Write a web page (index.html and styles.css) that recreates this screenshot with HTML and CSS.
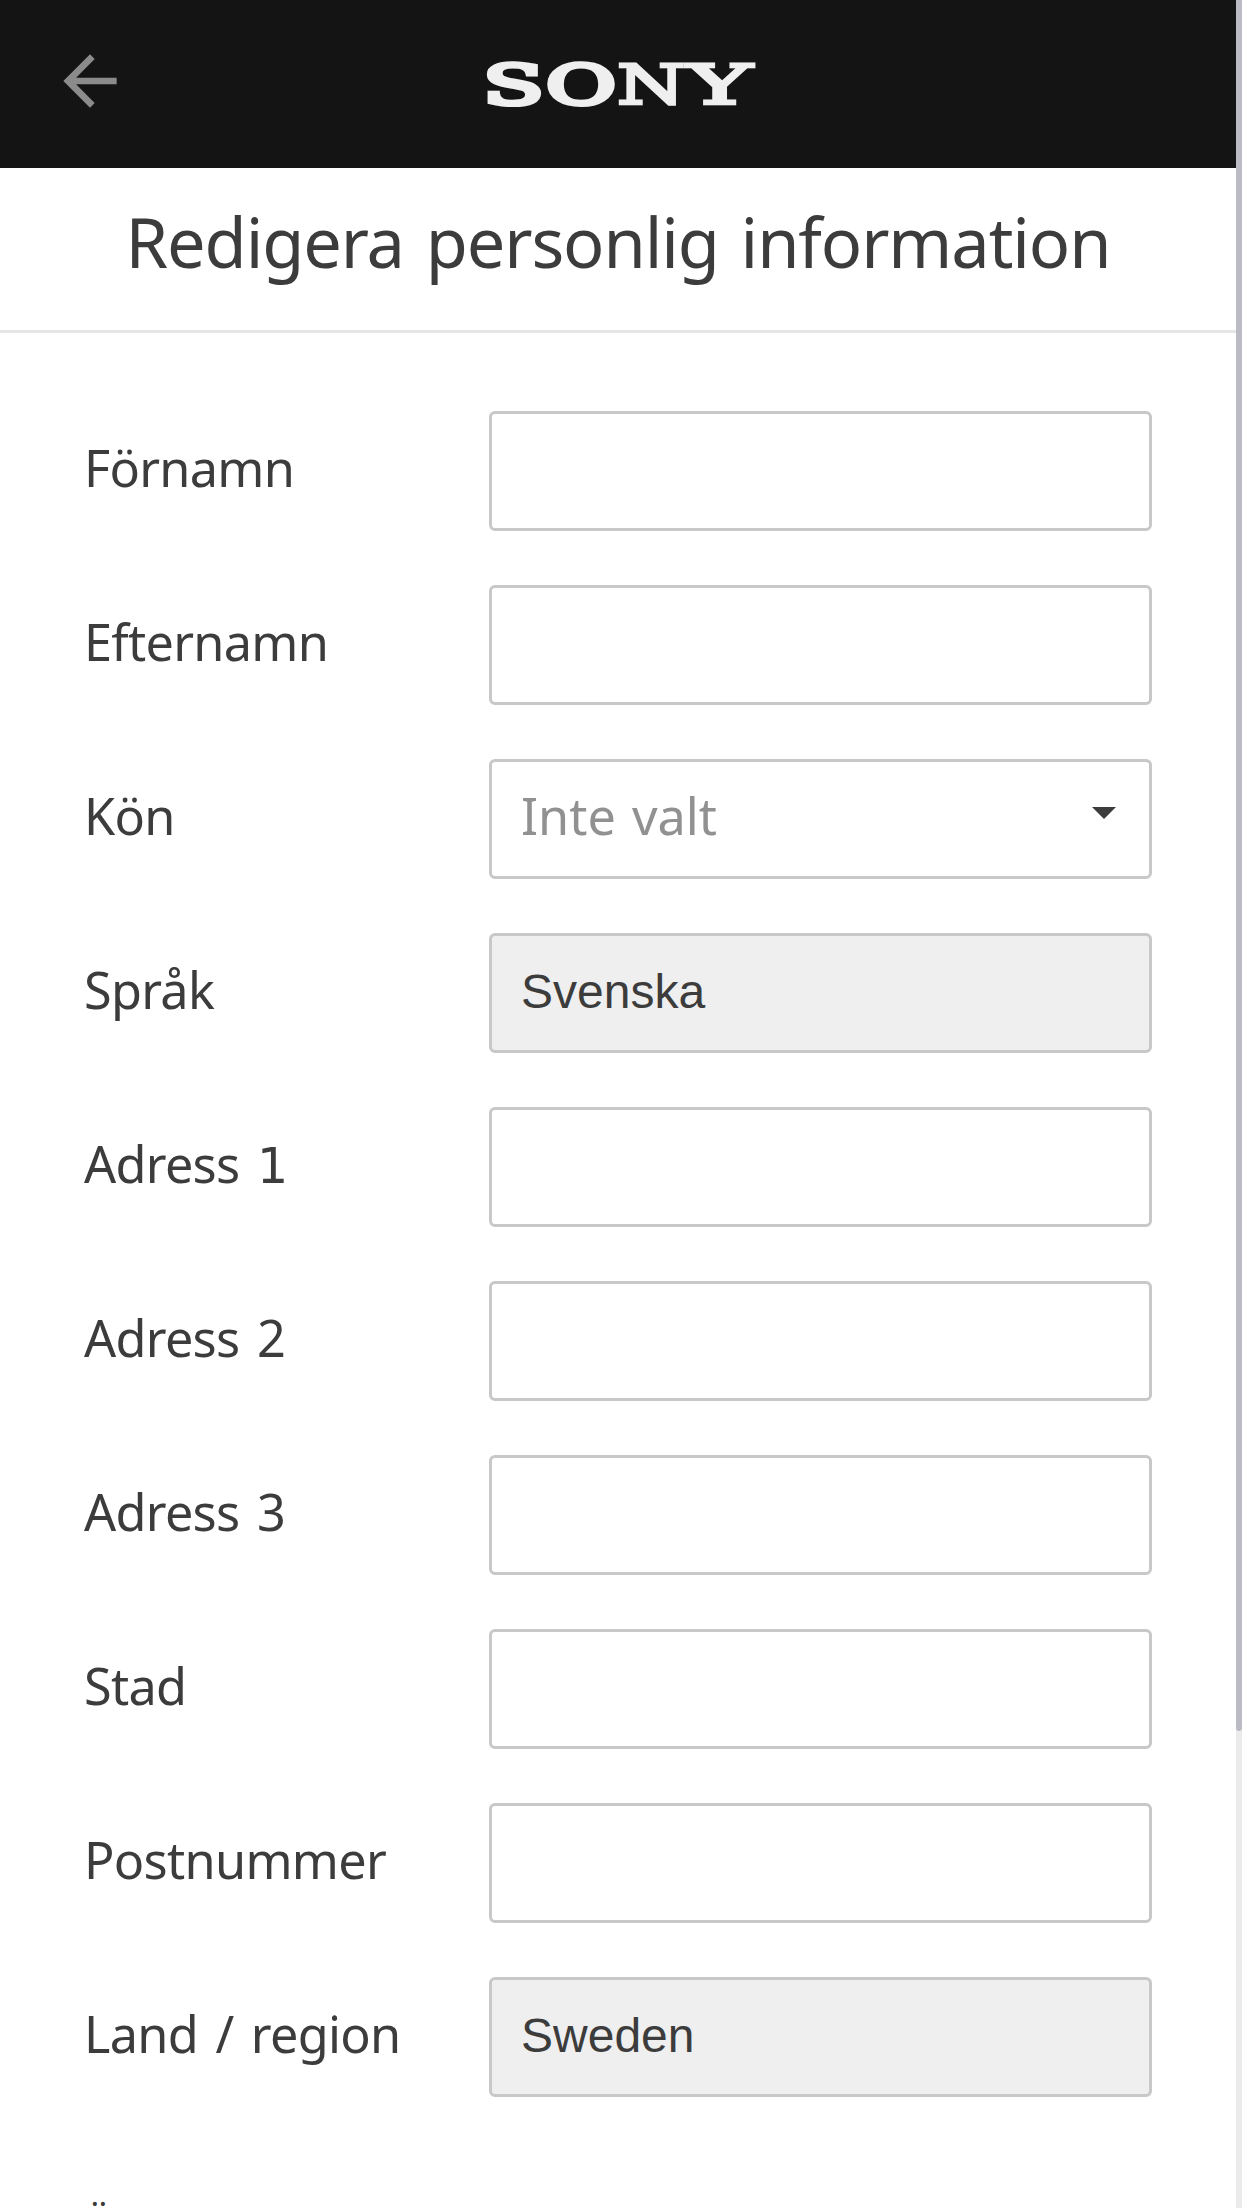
FILE: index.html
```html
<!DOCTYPE html>
<html lang="sv">
<head>
  <meta charset="UTF-8">
  <title>Redigera personlig information</title>
  <link rel="stylesheet" href="styles.css">
</head>
<body>

  <div class="page">
    <header class="top-bar">
      <a class="back" href="#" aria-label="Tillbaka">
        <svg viewBox="0 0 24 24"><path d="M20 11H7.83l5.59-5.59L12 4l-8 8 8 8 1.41-1.41L7.83 13H20v-2z"/></svg>
      </a>
      <svg class="logo" viewBox="0 0 300 100">
        <text y="70">
          <tspan class="heavy" x="10" textLength="61" lengthAdjust="spacingAndGlyphs">S</tspan>
          <tspan class="heavy" x="73" textLength="70" lengthAdjust="spacingAndGlyphs">O</tspan>
          <tspan x="144" textLength="68" lengthAdjust="spacingAndGlyphs">N</tspan>
          <tspan x="214" textLength="65" lengthAdjust="spacingAndGlyphs">Y</tspan>
        </text>
      </svg>
    </header>

    <h1>Redigera personlig information</h1>

    <form class="info-form">
      <div class="row">
        <label for="firstname">Förnamn</label>
        <input type="text" id="firstname">
      </div>
      <div class="row">
        <label for="lastname">Efternamn</label>
        <input type="text" id="lastname">
      </div>
      <div class="row">
        <label>Kön</label>
        <div class="select">
          <span>Inte valt</span>
          <svg class="caret" viewBox="0 0 24 12"><path d="M0 0h24L12 12z"/></svg>
        </div>
      </div>
      <div class="row">
        <label for="language">Språk</label>
        <input type="text" id="language" value="Svenska" disabled>
      </div>
      <div class="row">
        <label for="address1">Adress <span class="digit">1</span></label>
        <input type="text" id="address1">
      </div>
      <div class="row">
        <label for="address2">Adress 2</label>
        <input type="text" id="address2">
      </div>
      <div class="row">
        <label for="address3">Adress 3</label>
        <input type="text" id="address3">
      </div>
      <div class="row">
        <label for="city">Stad</label>
        <input type="text" id="city">
      </div>
      <div class="row">
        <label for="zip">Postnummer</label>
        <input type="text" id="zip">
      </div>
      <div class="row">
        <label for="country">Land / region</label>
        <input type="text" id="country" value="Sweden" disabled>
      </div>
    </form>

    <div class="next-section">Ö</div>
  </div>

  <div class="scrollbar"><div class="thumb"></div></div>

</body>
</html>
```
FILE: styles.css
```css
* {
  box-sizing: border-box;
}
body {
  margin: 0;
  height: 2208px;
  display: flex;
  overflow: hidden;
  background: #fff;
  color: #3c3c3c;
  font-family: "Noto Sans", sans-serif;
}
.page {
  flex: 1;
}
.top-bar {
  display: flex;
  align-items: center;
  height: 168px;
  padding: 0 0 6px 50px;
  background: #141414;
}
.back {
  width: 80px;
  height: 80px;
}
.back svg {
  display: block;
  fill: #8b8b8b;
}
.logo {
  width: 300px;
  height: 100px;
  margin: 6px 0 0 343px;
  overflow: visible;
  font-family: "DejaVu Serif", serif;
  font-size: 55px;
  fill: #efefef;
  stroke: #efefef;
  stroke-width: 2.8px;
}
.heavy {
  stroke-width: 4.5px;
}
h1 {
  height: 165px;
  margin: 0;
  padding-top: 9px;
  border-bottom: 3px solid #e6e6e6;
  font-size: 68.5px;
  font-weight: normal;
  letter-spacing: -1.1px;
  word-spacing: 5px;
  line-height: 130px;
  text-align: center;
}
.info-form {
  display: flex;
  flex-direction: column;
  gap: 54px;
  padding: 78px 84px 0;
}
.row {
  display: grid;
  grid-template-columns: 405px 663px;
  height: 120px;
  font-size: 50.4px;
  line-height: 114px;
}
label {
  letter-spacing: -0.7px;
  word-spacing: 5px;
}
.digit {
  font-family: "DejaVu Sans", sans-serif;
  font-size: 49px;
}
input,
.select {
  height: 120px;
  padding: 0 29px;
  border: 3px solid #c8c8c8;
  border-radius: 6px;
  background: #fff;
}
input {
  padding-bottom: 4px;
  color: #3c3c3c;
  font-family: "Liberation Sans", Arial, sans-serif;
  font-size: 48px;
}
input:disabled {
  background: #efefef;
}
.select {
  display: flex;
  justify-content: space-between;
  color: #919191;
  line-height: 108px;
  word-spacing: 3px;
}
.caret {
  width: 24px;
  height: 12px;
  margin-top: 45px;
  margin-right: 4px;
  fill: #3c3c3c;
}
.next-section {
  padding: 99px 82px 0;
  font-size: 43px;
  line-height: 60px;
}
.scrollbar {
  width: 6px;
  background: #ebebeb;
}
.thumb {
  height: 1731px;
  border-radius: 0 0 3px 3px;
  background: #bbbbc6;
}
```
